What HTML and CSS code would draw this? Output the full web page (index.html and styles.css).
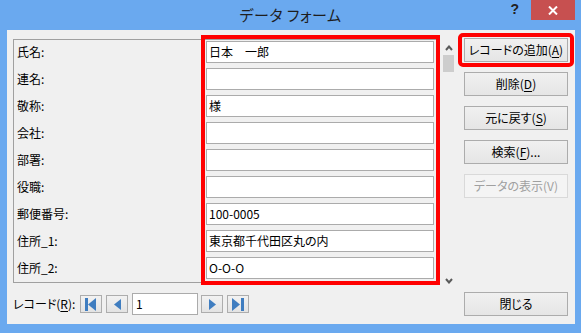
FILE: index.html
```html
<!DOCTYPE html>
<html lang="ja">
<head>
	<meta charset="UTF-8">
	<title>データ フォーム</title>
	<link rel="stylesheet" href="styles.css">
</head>
<body>
<div class="window">
	<div class="titlebar">
		<span></span>
		<h1 class="title">データ フォーム</h1>
		<div class="controls">
			<span class="help">?</span>
			<span class="close">
				<svg width="10" height="9" viewBox="0 0 10 9"><path d="M1 0.5 L9 8.5 M9 0.5 L1 8.5" stroke="#fff" stroke-width="2"/></svg>
			</span>
		</div>
	</div>
	<div class="client">
		<div class="left">
			<div class="panel">
				<div class="fields">
					<ul class="labels">
						<li>氏名:</li>
						<li>連名:</li>
						<li>敬称:</li>
						<li>会社:</li>
						<li>部署:</li>
						<li>役職:</li>
						<li>郵便番号:</li>
						<li>住所_1:</li>
						<li>住所_2:</li>
					</ul>
					<div class="inputs">
						<div class="field">日本　一郎</div>
						<div class="field"></div>
						<div class="field">様</div>
						<div class="field"></div>
						<div class="field"></div>
						<div class="field"></div>
						<div class="field">100-0005</div>
						<div class="field">東京都千代田区丸の内</div>
						<div class="field">O-O-O</div>
					</div>
				</div>
				<div class="scroll">
					<svg class="arrow" width="8" height="6" viewBox="0 0 8 6"><path d="M1 5 L4 1.5 L7 5" stroke="#5a5a5a" stroke-width="2" fill="none"/></svg>
					<div class="thumb"></div>
					<div class="track"></div>
					<svg class="arrow" width="8" height="6" viewBox="0 0 8 6"><path d="M1 1 L4 4.5 L7 1" stroke="#5a5a5a" stroke-width="2" fill="none"/></svg>
				</div>
			</div>
			<div class="nav">
				<span class="nav-label">レコード(<u>R</u>):</span>
				<a href="javascript:;" class="nav-btn">
					<svg width="12" height="13" viewBox="0 0 12 13"><rect x="0" y="0" width="3" height="13" fill="#3f7dc0"/><path d="M3 6.5 L11 0 L11 13 Z" fill="#3f7dc0"/></svg>
				</a>
				<a href="javascript:;" class="nav-btn">
					<svg width="7" height="11" viewBox="0 0 7 11"><path d="M0 5.5 L7 0 L7 11 Z" fill="#3f7dc0"/></svg>
				</a>
				<div class="record">1</div>
				<a href="javascript:;" class="nav-btn">
					<svg width="7" height="11" viewBox="0 0 7 11"><path d="M7 5.5 L0 0 L0 11 Z" fill="#3f7dc0"/></svg>
				</a>
				<a href="javascript:;" class="nav-btn">
					<svg width="12" height="13" viewBox="0 0 12 13"><path d="M8 6.5 L0 0 L0 13 Z" fill="#3f7dc0"/><rect x="9" y="0" width="3" height="13" fill="#3f7dc0"/></svg>
				</a>
			</div>
		</div>
		<div class="right">
			<div class="ring">
				<a href="javascript:;" class="btn">レコードの追加(<u>A</u>)</a>
			</div>
			<a href="javascript:;" class="btn gap-s">削除(<u>D</u>)</a>
			<a href="javascript:;" class="btn">元に戻す(<u>S</u>)</a>
			<a href="javascript:;" class="btn">検索(<u>F</u>)...</a>
			<a href="javascript:;" class="btn disabled">データの表示(V)</a>
			<a href="javascript:;" class="btn close-btn">閉じる</a>
		</div>
	</div>
</div>
</body>
</html>
```

FILE: styles.css
```css
body, h1, ul, li
{
	margin: 0;
	padding: 0;
}
ul { list-style: none; }
a { text-decoration: none; color: #000; }
u { text-underline-offset: 2px; }

html, body {
	width: 581px;
	height: 333px;
	overflow: hidden;
	font: 12px/1.5 "Noto Sans CJK JP", "Liberation Sans", sans-serif;
	font-feature-settings: "palt";
	background: #6aa9ef;
}

.window {
	width: 581px;
	height: 333px;
}

/* タイトルバー */
.titlebar {
	height: 30px;
	display: grid;
	grid-template-columns: 1fr auto 1fr;
}
.title {
	font-size: 15px;
	font-weight: normal;
	line-height: 30px;
	color: #1e1e1e;
	letter-spacing: 0.5px;
}
.controls {
	justify-self: end;
	display: flex;
	align-items: flex-start;
	margin-right: 6px;
}
.help {
	font: bold 14px/18px "Liberation Sans", sans-serif;
	color: #222;
	margin: 0 12px 0 0;
}
.close {
	width: 44px;
	height: 20px;
	background: #c75050;
	display: flex;
	align-items: center;
	justify-content: center;
}

/* 本体 */
.client {
	height: 294px;
	margin: 0 6px 0 7px;
	background: #f0f0f0;
	display: flex;
	padding: 3px 0 0 6px;
	box-sizing: border-box;
}
.left {
	margin-top: 6px;
}
.panel {
	display: flex;
}
.fields {
	display: flex;
	height: 242px;
	border: 1px solid #a0a0a0;
	border-right: none;
}
.labels {
	width: 187px;
	padding-top: 1px;
}
.labels li {
	height: 22px;
	line-height: 22px;
	margin-bottom: 5px;
	padding-left: 3px;
}
.inputs {
	margin-top: -5px;
	border: 4px solid #f00;
	padding: 2px 2px 2px 1px;
	align-self: flex-start;
	display: flex;
	flex-direction: column;
	gap: 5px;
}
.field {
	width: 228px;
	height: 22px;
	box-sizing: border-box;
	border: 1px solid #ababab;
	background: #fff;
	line-height: 20px;
	padding-left: 2px;
}

.scroll {
	width: 16px;
	display: flex;
	flex-direction: column;
	align-items: center;
	padding-top: 6px;
	height: 239px;
}
.scroll .arrow {
	margin-left: 1px;
}
.thumb {
	width: 11px;
	height: 17px;
	background: #cdcdcd;
	margin-top: 4px;
}
.track {
	flex: 1;
}

/* レコード移動 */
.nav {
	margin-top: 9px;
	height: 22px;
	display: flex;
	align-items: center;
}
.nav-label {
	width: 67px;
}
.nav-btn {
	width: 22px;
	height: 18px;
	box-sizing: border-box;
	border: 1px solid #adadad;
	background: linear-gradient(#f2f2f2, #e3e3e3);
	display: flex;
	align-items: center;
	justify-content: center;
	margin-right: 4px;
}
.record {
	width: 66px;
	height: 22px;
	box-sizing: border-box;
	border: 1px solid #ababab;
	background: #fff;
	line-height: 20px;
	padding-left: 3px;
	margin-right: 3px;
}

/* ボタン */
.right {
	margin-left: 2px;
	height: 283px;
	display: flex;
	flex-direction: column;
}
.ring {
	width: 116px;
	box-sizing: border-box;
	border: 4px solid #f00;
	border-radius: 5px;
	padding: 1px 2px;
}
.btn {
	display: block;
	width: 104px;
	height: 24px;
	box-sizing: border-box;
	border: 1px solid #acacac;
	background: linear-gradient(#f0f0f0, #e5e5e5);
	text-align: center;
	line-height: 22px;
	margin: 10px 0 0 6px;
}
.ring .btn {
	margin: 0;
}
.btn.gap-s {
	margin-top: 5px;
}
.btn.disabled {
	color: #a0a0a0;
	border-color: #d9d9d9;
	background: #f4f4f4;
}
.btn.close-btn {
	margin-top: auto;
}
```
